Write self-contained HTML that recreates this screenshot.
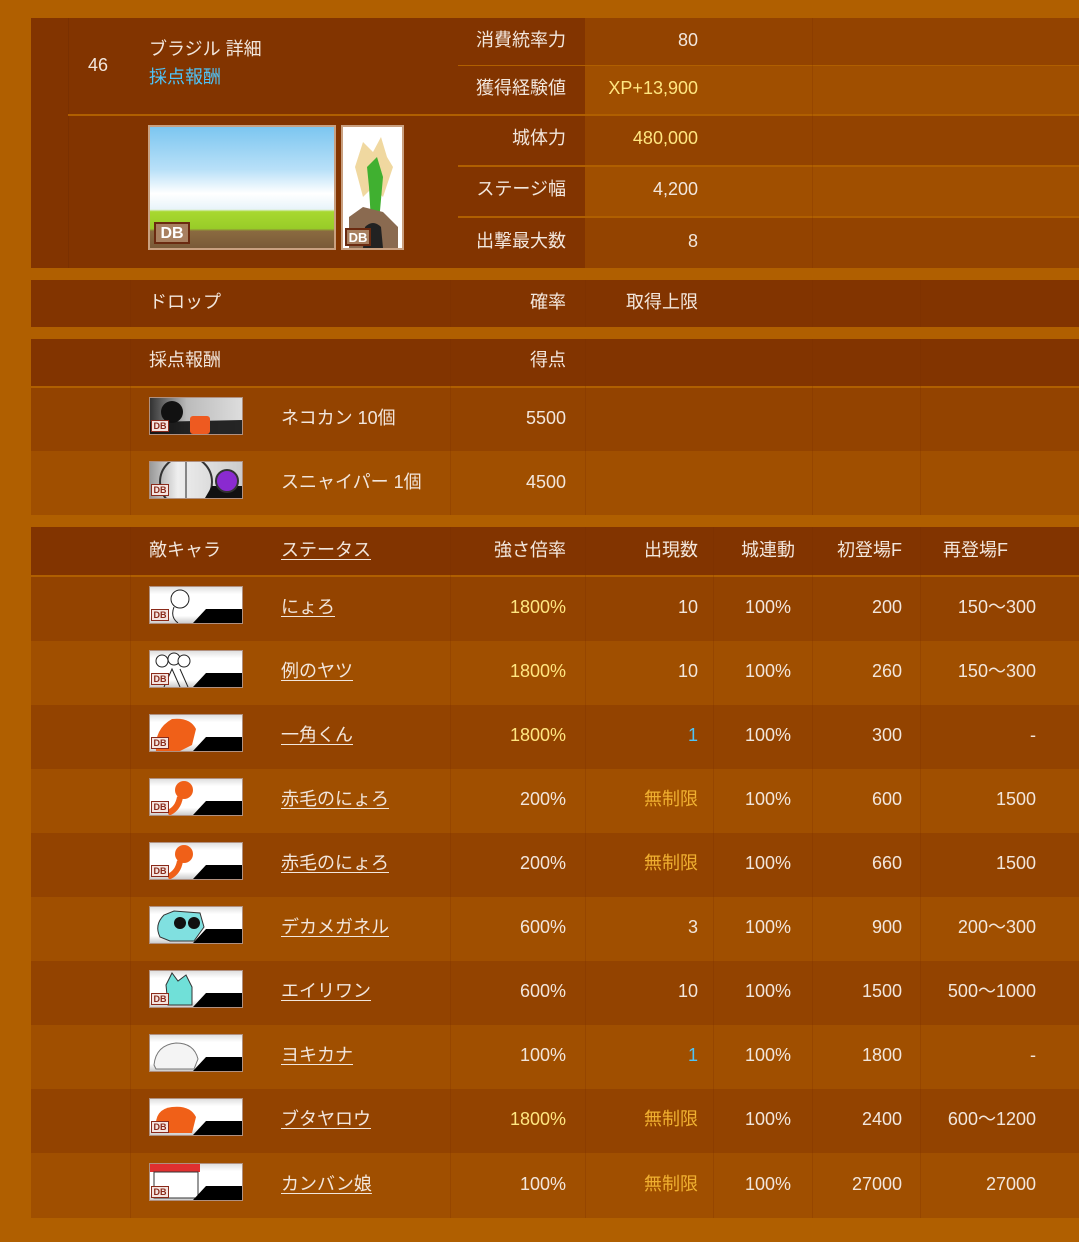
<!DOCTYPE html>
<html><head><meta charset="utf-8">
<style>
*{margin:0;padding:0;box-sizing:border-box}
body{width:1079px;height:1242px;background:#b05f00;position:relative;overflow:hidden;font-family:"Liberation Sans","Noto Sans CJK JP",sans-serif;font-size:18px;color:#f2e6dc}
.b{position:absolute}
.t{position:absolute;white-space:nowrap;line-height:24px}
.r{text-align:right}
.c{text-align:center}
.y{color:#ffe680}
.g{color:#f0b030}
.bl{color:#4fc3f7}
.u{text-decoration:underline;text-underline-offset:3px}
.d{background:#823400}
.m{background:#934300}
.l{background:#a04f00}
.vl{position:absolute;width:1px;background:rgba(120,45,0,0.25)}
.ic{position:absolute;left:149px;width:94px;height:38px;background:linear-gradient(#e0e0e0,#fff 20%,#fff 80%,#ccc);border:1px solid #b09080}
.ic svg{position:absolute;left:0;top:0}
.db{position:absolute;left:1px;bottom:2px;width:18px;height:12px;border:1px solid #8a2a1a;background:#f4e4e0;color:#8a2a1a;font-size:9px;line-height:10px;font-weight:bold;text-align:center}
</style></head><body>

<div class="b d" style="left:31px;top:18px;width:419px;height:250px"></div>
<div class="b" style="left:68px;top:18px;width:1px;height:250px;background:#7a3000"></div>
<div class="b" style="left:68px;top:114px;width:382px;height:2px;background:#b05f00"></div>
<div class="b d" style="left:450px;top:18px;width:135px;height:250px"></div>
<div class="b m" style="left:585px;top:18px;width:494px;height:47px"></div>
<div class="b l" style="left:585px;top:66px;width:494px;height:48px"></div>
<div class="b m" style="left:585px;top:116px;width:494px;height:49px"></div>
<div class="b l" style="left:585px;top:167px;width:494px;height:49px"></div>
<div class="b m" style="left:585px;top:218px;width:494px;height:50px"></div>
<div class="b" style="left:458px;top:65px;width:621px;height:1px;background:#b05f00"></div>
<div class="b" style="left:450px;top:114px;width:629px;height:2px;background:#b05f00"></div>
<div class="b" style="left:458px;top:165px;width:621px;height:2px;background:#b05f00"></div>
<div class="b" style="left:458px;top:216px;width:621px;height:2px;background:#b05f00"></div>
<div class="vl" style="left:812px;top:18px;height:250px"></div>

<div class="t" style="left:88px;top:53px">46</div>
<div class="t" style="left:149px;top:37px">ブラジル 詳細</div>
<div class="t bl" style="left:149px;top:65px">採点報酬</div>
<div class="t r" style="left:450px;width:116px;top:28px">消費統率力</div>
<div class="t r" style="left:450px;width:116px;top:76px">獲得経験値</div>
<div class="t r" style="left:450px;width:116px;top:126px">城体力</div>
<div class="t r" style="left:450px;width:116px;top:177px">ステージ幅</div>
<div class="t r" style="left:450px;width:116px;top:229px">出撃最大数</div>
<div class="t r" style="left:585px;width:113px;top:28px">80</div>
<div class="t r y" style="left:585px;width:113px;top:76px">XP+13,900</div>
<div class="t r y" style="left:585px;width:113px;top:126px">480,000</div>
<div class="t r" style="left:585px;width:113px;top:177px">4,200</div>
<div class="t r" style="left:585px;width:113px;top:229px">8</div>

<div class="b" style="left:148px;top:125px;width:188px;height:125px;border:2px solid #c9a080;background:linear-gradient(#7cc6f0 0%,#b8e0f8 35%,#fff 55%,#e8f4fa 68%,#a8d830 70%,#98cc28 84%,#8a6a40 86%,#7a5a38 100%)">
<div class="db" style="left:4px;bottom:4px;width:36px;height:22px;font-size:16px;line-height:20px;background:#a88060;color:#fff;border:2px solid #6a2a10">DB</div></div>
<div class="b" style="left:341px;top:125px;width:63px;height:125px;border:2px solid #c9a080;background:#fff">
<svg width="59" height="121" style="position:absolute;left:0;top:0"><path d="M12 40 L20 15 L30 25 L38 10 L44 30 L50 40 L40 70 L30 60 L20 70 Z" fill="#f0d8a0"/><path d="M24 40 L34 30 L40 50 L36 95 L28 95 L26 60 Z" fill="#40b030"/><path d="M6 90 L20 80 L40 85 L55 100 L55 121 L6 121 Z" fill="#8a6a50"/><path d="M20 121 L22 100 Q30 92 38 100 L40 121 Z" fill="#222"/></svg>
<div class="db" style="left:2px;bottom:2px;width:26px;height:18px;font-size:13px;line-height:16px;background:#a88060;color:#fff;border:2px solid #6a2a10">DB</div></div>

<div class="b d" style="left:31px;top:280px;width:1048px;height:47px"></div>
<div class="vl" style="left:130px;top:280px;height:47px"></div>
<div class="vl" style="left:450px;top:280px;height:47px"></div>
<div class="vl" style="left:585px;top:280px;height:47px"></div>
<div class="vl" style="left:812px;top:280px;height:47px"></div>
<div class="vl" style="left:920px;top:280px;height:47px"></div>
<div class="t" style="left:149px;top:290px">ドロップ</div>
<div class="t r" style="left:450px;width:116px;top:290px">確率</div>
<div class="t r" style="left:585px;width:113px;top:290px">取得上限</div>

<div class="b d" style="left:31px;top:339px;width:1048px;height:47px"></div>
<div class="b m" style="left:31px;top:388px;width:1048px;height:63px"></div>
<div class="b l" style="left:31px;top:451px;width:1048px;height:64px"></div>
<div class="vl" style="left:130px;top:339px;height:176px"></div>
<div class="vl" style="left:450px;top:339px;height:176px"></div>
<div class="vl" style="left:585px;top:339px;height:176px"></div>
<div class="vl" style="left:812px;top:339px;height:176px"></div>
<div class="vl" style="left:920px;top:339px;height:176px"></div>
<div class="t" style="left:149px;top:348px">採点報酬</div>
<div class="t r" style="left:450px;width:116px;top:348px">得点</div>
<div class="ic" style="top:397px;background:linear-gradient(90deg,#333,#bbb 40%,#ddd)"><svg width="92" height="36"><circle cx="22" cy="14" r="11" fill="#111"/><polygon points="0,36 0,24 92,22 92,36" fill="#111" opacity=".9"/><rect x="40" y="18" width="20" height="18" rx="3" fill="#ee5a20"/></svg><div class="db">DB</div></div>
<div class="t" style="left:281px;top:406px">ネコカン 10個</div>
<div class="t r" style="left:450px;width:116px;top:406px">5500</div>
<div class="ic" style="top:461px;background:linear-gradient(90deg,#999,#eee 30%,#ccc)"><svg width="92" height="36"><circle cx="36" cy="20" r="26" fill="none" stroke="#333" stroke-width="2"/><line x1="36" y1="0" x2="36" y2="36" stroke="#222"/><polygon points="55,36 62,24 92,24 92,36" fill="#111"/><circle cx="77" cy="19" r="11" fill="#8a2ad0" stroke="#333" stroke-width="2"/></svg><div class="db">DB</div></div>
<div class="t" style="left:281px;top:470px">スニャイパー 1個</div>
<div class="t r" style="left:450px;width:116px;top:470px">4500</div>

<div class="b d" style="left:31px;top:527px;width:1048px;height:48px"></div>
<div class="t" style="left:149px;top:538px">敵キャラ</div>
<div class="t u" style="left:281px;top:538px">ステータス</div>
<div class="t r" style="left:450px;width:116px;top:538px">強さ倍率</div>
<div class="t r" style="left:585px;width:113px;top:538px">出現数</div>
<div class="t c" style="left:713px;width:110px;top:538px">城連動</div>
<div class="t r" style="left:812px;width:90px;top:538px">初登場F</div>
<div class="t r" style="left:920px;width:88px;top:538px">再登場F</div>

<div class="b m" style="left:31px;top:577px;width:1048px;height:64px"></div>
<div class="b l" style="left:31px;top:641px;width:1048px;height:64px"></div>
<div class="b m" style="left:31px;top:705px;width:1048px;height:64px"></div>
<div class="b l" style="left:31px;top:769px;width:1048px;height:64px"></div>
<div class="b m" style="left:31px;top:833px;width:1048px;height:64px"></div>
<div class="b l" style="left:31px;top:897px;width:1048px;height:64px"></div>
<div class="b m" style="left:31px;top:961px;width:1048px;height:64px"></div>
<div class="b l" style="left:31px;top:1025px;width:1048px;height:64px"></div>
<div class="b m" style="left:31px;top:1089px;width:1048px;height:64px"></div>
<div class="b l" style="left:31px;top:1153px;width:1048px;height:65px"></div>
<div class="vl" style="left:130px;top:527px;height:691px"></div>
<div class="vl" style="left:450px;top:527px;height:691px"></div>
<div class="vl" style="left:585px;top:527px;height:691px"></div>
<div class="vl" style="left:713px;top:527px;height:691px"></div>
<div class="vl" style="left:812px;top:527px;height:691px"></div>
<div class="vl" style="left:920px;top:527px;height:691px"></div>

<div class="ic" style="top:586px"><svg width="92" height="36"><circle cx="30" cy="12" r="9" fill="#fff" stroke="#222"/><path d="M24 20 Q20 30 28 36" stroke="#222" fill="none"/><polygon points="43,36 56,22 92,22 92,36" fill="#000"/></svg><div class="db">DB</div></div>
<div class="t u" style="left:281px;top:595px">にょろ</div>
<div class="t r y" style="left:450px;width:116px;top:595px">1800%</div>
<div class="t r" style="left:585px;width:113px;top:595px">10</div>
<div class="t c" style="left:713px;width:110px;top:595px">100%</div>
<div class="t r" style="left:812px;width:90px;top:595px">200</div>
<div class="t r" style="left:920px;width:116px;top:595px">150～300</div>

<div class="ic" style="top:650px"><svg width="92" height="36"><circle cx="12" cy="10" r="6" fill="#fff" stroke="#222"/><circle cx="24" cy="8" r="6" fill="#fff" stroke="#222"/><circle cx="34" cy="10" r="6" fill="#fff" stroke="#222"/><path d="M14 36 L22 18 L30 36 M30 18 L38 36" stroke="#222" fill="none"/><polygon points="43,36 56,22 92,22 92,36" fill="#000"/></svg><div class="db">DB</div></div>
<div class="t u" style="left:281px;top:659px">例のヤツ</div>
<div class="t r y" style="left:450px;width:116px;top:659px">1800%</div>
<div class="t r" style="left:585px;width:113px;top:659px">10</div>
<div class="t c" style="left:713px;width:110px;top:659px">100%</div>
<div class="t r" style="left:812px;width:90px;top:659px">260</div>
<div class="t r" style="left:920px;width:116px;top:659px">150～300</div>

<div class="ic" style="top:714px"><svg width="92" height="36"><path d="M6 36 Q4 14 22 4 Q40 2 46 14 L42 30 L30 36 Z" fill="#f06018"/><polygon points="43,36 56,22 92,22 92,36" fill="#000"/></svg><div class="db">DB</div></div>
<div class="t u" style="left:281px;top:723px">一角くん</div>
<div class="t r y" style="left:450px;width:116px;top:723px">1800%</div>
<div class="t r bl" style="left:585px;width:113px;top:723px">1</div>
<div class="t c" style="left:713px;width:110px;top:723px">100%</div>
<div class="t r" style="left:812px;width:90px;top:723px">300</div>
<div class="t r" style="left:920px;width:116px;top:723px">-</div>

<div class="ic" style="top:778px"><svg width="92" height="36"><circle cx="34" cy="11" r="9" fill="#f06018"/><path d="M30 18 Q28 30 18 34" stroke="#f06018" stroke-width="6" fill="none"/><polygon points="43,36 56,22 92,22 92,36" fill="#000"/></svg><div class="db">DB</div></div>
<div class="t u" style="left:281px;top:787px">赤毛のにょろ</div>
<div class="t r" style="left:450px;width:116px;top:787px">200%</div>
<div class="t r g" style="left:585px;width:113px;top:787px">無制限</div>
<div class="t c" style="left:713px;width:110px;top:787px">100%</div>
<div class="t r" style="left:812px;width:90px;top:787px">600</div>
<div class="t r" style="left:920px;width:116px;top:787px">1500</div>

<div class="ic" style="top:842px"><svg width="92" height="36"><circle cx="34" cy="11" r="9" fill="#f06018"/><path d="M30 18 Q28 30 18 34" stroke="#f06018" stroke-width="6" fill="none"/><polygon points="43,36 56,22 92,22 92,36" fill="#000"/></svg><div class="db">DB</div></div>
<div class="t u" style="left:281px;top:851px">赤毛のにょろ</div>
<div class="t r" style="left:450px;width:116px;top:851px">200%</div>
<div class="t r g" style="left:585px;width:113px;top:851px">無制限</div>
<div class="t c" style="left:713px;width:110px;top:851px">100%</div>
<div class="t r" style="left:812px;width:90px;top:851px">660</div>
<div class="t r" style="left:920px;width:116px;top:851px">1500</div>

<div class="ic" style="top:906px"><svg width="92" height="36"><path d="M10 30 Q4 18 14 8 L24 4 L50 6 L54 20 L44 34 L20 34 Z" fill="#80e0e0" stroke="#333"/><circle cx="30" cy="16" r="6" fill="#111"/><circle cx="44" cy="16" r="6" fill="#111"/><polygon points="43,36 56,22 92,22 92,36" fill="#000"/></svg></div>
<div class="t u" style="left:281px;top:915px">デカメガネル</div>
<div class="t r" style="left:450px;width:116px;top:915px">600%</div>
<div class="t r" style="left:585px;width:113px;top:915px">3</div>
<div class="t c" style="left:713px;width:110px;top:915px">100%</div>
<div class="t r" style="left:812px;width:90px;top:915px">900</div>
<div class="t r" style="left:920px;width:116px;top:915px">200～300</div>

<div class="ic" style="top:970px"><svg width="92" height="36"><path d="M18 34 L16 14 L22 2 L28 10 L36 4 L42 16 L42 34 Z" fill="#70e0d8" stroke="#333"/><polygon points="43,36 56,22 92,22 92,36" fill="#000"/></svg><div class="db">DB</div></div>
<div class="t u" style="left:281px;top:979px">エイリワン</div>
<div class="t r" style="left:450px;width:116px;top:979px">600%</div>
<div class="t r" style="left:585px;width:113px;top:979px">10</div>
<div class="t c" style="left:713px;width:110px;top:979px">100%</div>
<div class="t r" style="left:812px;width:90px;top:979px">1500</div>
<div class="t r" style="left:920px;width:116px;top:979px">500～1000</div>

<div class="ic" style="top:1034px"><svg width="92" height="36"><path d="M4 30 Q6 10 26 8 Q44 8 48 24 L44 34 L6 34 Z" fill="#f4f4f4" stroke="#777"/><polygon points="43,36 56,22 92,22 92,36" fill="#000"/></svg></div>
<div class="t u" style="left:281px;top:1043px">ヨキカナ</div>
<div class="t r" style="left:450px;width:116px;top:1043px">100%</div>
<div class="t r bl" style="left:585px;width:113px;top:1043px">1</div>
<div class="t c" style="left:713px;width:110px;top:1043px">100%</div>
<div class="t r" style="left:812px;width:90px;top:1043px">1800</div>
<div class="t r" style="left:920px;width:116px;top:1043px">-</div>

<div class="ic" style="top:1098px"><svg width="92" height="36"><path d="M6 30 Q4 10 22 8 Q40 6 46 18 L42 34 L8 34 Z" fill="#f06018"/><polygon points="43,36 56,22 92,22 92,36" fill="#000"/></svg><div class="db">DB</div></div>
<div class="t u" style="left:281px;top:1107px">ブタヤロウ</div>
<div class="t r y" style="left:450px;width:116px;top:1107px">1800%</div>
<div class="t r g" style="left:585px;width:113px;top:1107px">無制限</div>
<div class="t c" style="left:713px;width:110px;top:1107px">100%</div>
<div class="t r" style="left:812px;width:90px;top:1107px">2400</div>
<div class="t r" style="left:920px;width:116px;top:1107px">600～1200</div>

<div class="ic" style="top:1163px"><svg width="92" height="36"><rect x="0" y="0" width="50" height="8" fill="#e03030"/><rect x="4" y="8" width="44" height="26" fill="#fff" stroke="#333"/><polygon points="43,36 56,22 92,22 92,36" fill="#000"/></svg><div class="db">DB</div></div>
<div class="t u" style="left:281px;top:1172px">カンバン娘</div>
<div class="t r" style="left:450px;width:116px;top:1172px">100%</div>
<div class="t r g" style="left:585px;width:113px;top:1172px">無制限</div>
<div class="t c" style="left:713px;width:110px;top:1172px">100%</div>
<div class="t r" style="left:812px;width:90px;top:1172px">27000</div>
<div class="t r" style="left:920px;width:116px;top:1172px">27000</div>
</body></html>
